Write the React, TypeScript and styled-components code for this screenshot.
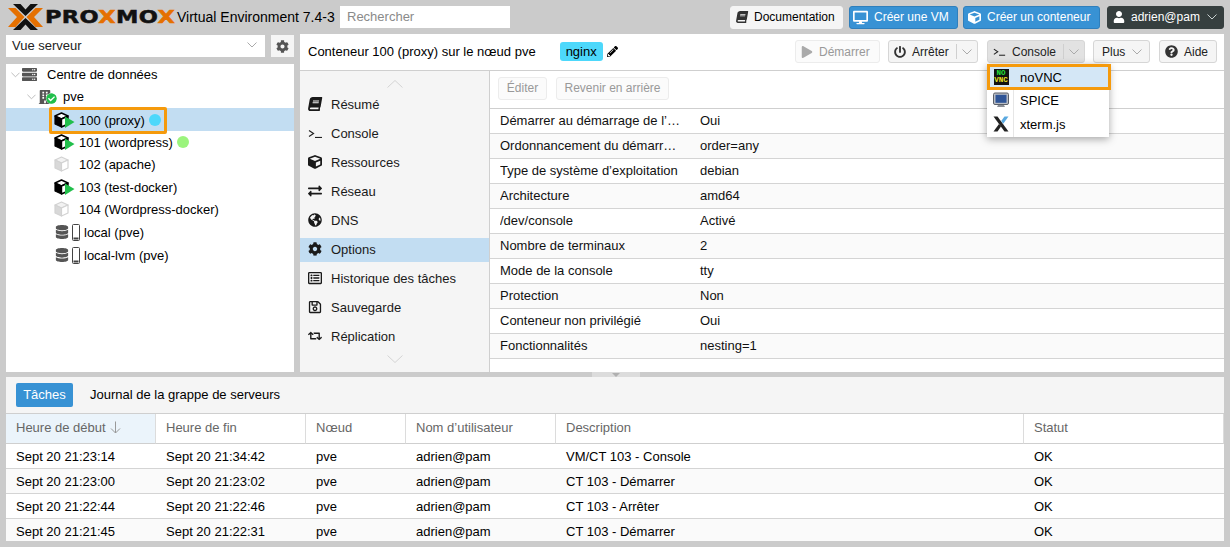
import React from 'react';
import styled, { createGlobalStyle } from 'styled-components';
import {
  FaBook, FaDesktop, FaCube, FaUser, FaCog, FaPlay, FaPowerOff, FaQuestionCircle,
  FaExchangeAlt, FaGlobeAmericas, FaRegListAlt, FaRegSave, FaRetweet, FaPencilAlt,
  FaDatabase, FaServer, FaBuilding, FaCheckCircle,
} from 'react-icons/fa';

const GlobalStyle = createGlobalStyle`
  html, body { margin: 0; padding: 0; background: #cbcbcb; }
  * { box-sizing: border-box; }
  body { font-family: "Liberation Sans", Arial, sans-serif; font-size: 13px; color: #000; }
`;

const Page = styled.div`
  width: 1230px;
  height: 547px;
  overflow: hidden;
  background: #cbcbcb;
  display: flex;
  flex-direction: column;
`;

/* top bar */
const Header = styled.header`
  height: 34px;
  flex: none;
  display: flex;
  align-items: center;
  padding: 0 6px 0 8px;
`;

const Logo = styled.div`
  display: flex;
  align-items: center;
  width: 169px;
  flex: none;
`;

const LogoWord = styled.span`
  font-family: "DejaVu Sans", sans-serif;
  font-weight: 700;
  font-size: 18px;
  letter-spacing: 0.3px;
  line-height: 1;
  margin-left: 2px;
  color: #111;
  -webkit-text-stroke: 0.5px currentColor;
  white-space: nowrap;
  transform: scaleX(1.25);
  transform-origin: left center;
`;

const LogoX = styled.span`
  color: #e57000;
`;

const Version = styled.span`
  font-size: 14px;
  white-space: nowrap;
  width: 163px;
  flex: none;
`;

const Search = styled.div`
  width: 170px;
  height: 22px;
  background: #fff;
  color: #8a8a8a;
  padding: 0 7px;
  line-height: 22px;
`;

const HeaderRight = styled.div`
  margin-left: auto;
  display: flex;
  gap: 6px;
  align-items: center;
  & > :nth-child(3) { margin-left: -1px; }
  & > :last-child { margin-left: 1px; }
`;

const TopButton = styled.div<{ $kind: 'light' | 'blue' | 'dark'; $width: number; $pad: number }>`
  width: ${p => p.$width}px;
  height: 23px;
  display: flex;
  align-items: center;
  gap: 6px;
  padding: 0 6px 0 ${p => p.$pad}px;
  font-size: 12px;
  white-space: nowrap;
  border-radius: 3px;
  border: 1px solid ${p => (p.$kind === 'blue' ? '#2f7fbc' : p.$kind === 'dark' ? '#363f3f' : '#f5f5f5')};
  background: ${p => (p.$kind === 'blue' ? '#3892d4' : p.$kind === 'dark' ? '#363f3f' : '#f5f5f5')};
  color: ${p => (p.$kind === 'light' ? '#000' : '#fff')};
  svg { flex: none; color: ${p => (p.$kind === 'light' ? '#333' : '#fff')}; }
`;

const Caret = styled.svg`
  width: 10px;
  height: 6px;
  flex: none;
  fill: none;
  stroke: currentColor;
  stroke-width: 1;
`;

const TopCaret = styled(Caret)`
  margin-left: auto;
  && { color: #c8d0d0; }
`;

const SlantedBook = styled(FaBook)`
  transform: skewX(-10deg);
`;

/* middle */
const Main = styled.div`
  height: 338px;
  flex: none;
  display: flex;
  gap: 6px;
  padding: 0 6px;
`;

const LeftColumn = styled.div`
  width: 288px;
  flex: none;
  display: flex;
  flex-direction: column;
  gap: 7px;
  padding-top: 1px;
`;

const ViewRow = styled.div`
  height: 22px;
  flex: none;
  display: flex;
  gap: 6px;
`;

const ViewSelect = styled.div`
  flex: 1;
  background: #fff;
  display: flex;
  align-items: center;
  justify-content: space-between;
  padding: 0 8px 2px 6px;
  color: #222;
  svg { color: #aaa; }
`;

const GearButton = styled.div`
  width: 23px;
  background: #f5f5f5;
  display: flex;
  align-items: center;
  justify-content: center;
  font-size: 13px;
  color: #555;
`;

const Tree = styled.div`
  flex: 1;
  background: #fff;
`;

const TreeRow = styled.div<{ $indent: number; $selected?: boolean }>`
  height: 22.6px;
  display: flex;
  align-items: center;
  padding-left: ${p => p.$indent}px;
  background: ${p => (p.$selected ? '#c2ddf2' : 'transparent')};
  white-space: nowrap;
  &:first-child { height: 21.6px; }
`;

const TreeChevron = styled(Caret)`
  color: #b5b5b5;
  margin-right: 2px;
  width: 9px;
`;

const TreeLabel = styled.span<{ $gap: number }>`
  margin-left: ${p => p.$gap}px;
`;

const Dot = styled.span<{ $color: string }>`
  width: 12px;
  height: 12px;
  border-radius: 50%;
  background: ${p => p.$color};
  margin-left: 4px;
  flex: none;
`;

const Highlight = styled.div`
  display: flex;
  align-items: center;
  height: 27px;
  width: 118px;
  border: 3px solid #f59a0c;
  border-radius: 2px;
  padding-left: 2px;
  flex: none;
  position: relative;
  top: 1px;
`;

const IconBox = styled.span<{ $width: number }>`
  width: ${p => p.$width}px;
  height: 17px;
  flex: none;
  position: relative;
  display: inline-flex;
  align-items: center;
`;

const NodeBadge = styled(FaCheckCircle)`
  position: absolute;
  left: 8px;
  top: 5px;
  font-size: 11px;
  color: #21bf4b;
  background: #fff;
  border-radius: 50%;
`;

const RightPanel = styled.div`
  flex: 1;
  display: flex;
  flex-direction: column;
  background: #fff;
  min-width: 0;
`;

const ContentHeader = styled.div`
  height: 37px;
  flex: none;
  display: flex;
  align-items: center;
  padding: 0 7px 1px 8px;
  border-bottom: 1px solid #cfcfcf;
`;

const Title = styled.span`
  white-space: nowrap;
`;

const Tag = styled.span`
  background: #4dd8fb;
  border-radius: 3px;
  height: 19px;
  line-height: 19px;
  padding: 0 6px;
  margin-left: 24px;
`;

const TagPencil = styled(FaPencilAlt)`
  font-size: 11px;
  margin-left: 4px;
`;

const Actions = styled.div`
  margin-left: auto;
  display: flex;
  gap: 8px;
  & > :nth-child(3), & > :nth-child(5) { margin-left: 1px; }
`;

const ToolButton = styled.div<{ $width: number; $disabled?: boolean; $pressed?: boolean; $pad?: number }>`
  position: relative;
  width: ${p => p.$width}px;
  height: 23px;
  display: flex;
  align-items: center;
  gap: 6px;
  padding: 0 5px 0 ${p => p.$pad ?? 5}px;
  font-size: 12px;
  white-space: nowrap;
  border-radius: 3px;
  border: 1px solid ${p => (p.$disabled ? '#ececec' : '#d6d6d6')};
  background: ${p => (p.$pressed ? '#e2e2e2' : p.$disabled ? '#fbfbfb' : '#f5f5f5')};
  color: ${p => (p.$disabled ? '#999' : '#222')};
  svg { flex: none; }
`;

const Split = styled.span`
  margin-left: auto;
  align-self: stretch;
  margin-block: 3px;
  border-left: 1px solid #cfcfcf;
  padding-left: 5px;
  display: flex;
  align-items: center;
  color: #aaa;
`;

const PlainCaret = styled(Caret)`
  margin-left: auto;
  margin-right: 2px;
  color: #aaa;
`;

const Menu = styled.div`
  position: absolute;
  left: -1px;
  top: 23px;
  width: 122px;
  height: 73px;
  background: #fff;
  box-shadow: 0 2px 8px rgba(0, 0, 0, 0.35);
  z-index: 5;
  color: #000;
  font-size: 13px;
`;

const MenuItem = styled.div<{ $active?: boolean }>`
  height: ${p => (p.$active ? 26 : 24)}px;
  width: ${p => (p.$active ? 124 : 122)}px;
  margin-bottom: ${p => (p.$active ? -2 : 0)}px;
  display: flex;
  align-items: center;
  background: ${p => (p.$active ? '#d4e7f6' : 'transparent')};
  border: ${p => (p.$active ? '3px solid #f59a0c' : 'none')};
  padding-left: ${p => (p.$active ? 3 : 6)}px;
  position: relative;
  z-index: ${p => (p.$active ? 1 : 0)};
`;

const MenuIcon = styled.span`
  width: 16px;
  height: 16px;
  flex: none;
  display: flex;
  align-items: center;
  justify-content: center;
  margin-right: 11px;
`;

const MenuSeparator = styled.div`
  position: absolute;
  left: 26px;
  top: 0;
  bottom: 0;
  border-left: 1px solid #e6e6e6;
`;

const NoVncBadge = styled.span`
  width: 15px;
  height: 16px;
  background: #111;
  display: flex;
  flex-direction: column;
  justify-content: center;
  align-items: center;
  font-family: "Liberation Mono", monospace;
  font-weight: 700;
  font-size: 7.5px;
  line-height: 7.5px;
`;

const NoVncLine = styled.span<{ $color: string }>`
  color: ${p => p.$color};
`;

const ContentBody = styled.div`
  flex: 1;
  display: flex;
  min-height: 0;
`;

const SideNav = styled.nav`
  width: 190px;
  flex: none;
  background: #f5f5f5;
  border-right: 1px solid #cfcfcf;
  display: flex;
  flex-direction: column;
  gap: 5px;
`;

const NavScroll = styled.div<{ $height: number; $align: string }>`
  height: ${p => p.$height}px;
  flex: none;
  display: flex;
  align-items: ${p => p.$align};
  justify-content: center;
  color: #d4d4d4;
`;

const NavCaret = styled.svg`
  width: 16px;
  height: 8px;
  fill: none;
  stroke: currentColor;
  stroke-width: 1;
`;

const NavItem = styled.div<{ $active?: boolean }>`
  height: 24px;
  flex: none;
  display: flex;
  align-items: center;
  padding: 0 0 2px 8px;
  background: ${p => (p.$active ? '#c2ddf2' : 'transparent')};
  color: #1a1a1a;
  svg { font-size: 14px; flex: none; color: #1a1a1a; }
`;

const NavIconSlot = styled.span`
  width: 23px;
  flex: none;
  display: flex;
  align-items: center;
`;

const Options = styled.div`
  flex: 1;
  min-width: 0;
`;

const OptionsToolbar = styled.div`
  height: 38px;
  display: flex;
  gap: 9px;
  padding: 6px 8px;
  border-bottom: 1px solid #cfcfcf;
`;

const GhostButton = styled.div<{ $width: number }>`
  width: ${p => p.$width}px;
  height: 23px;
  border: 1px solid #ececec;
  border-radius: 3px;
  background: #fbfbfb;
  color: #999;
  font-size: 12px;
  text-align: center;
  line-height: 21px;
`;

const OptionRow = styled.div<{ $alt: boolean }>`
  height: 25px;
  display: flex;
  align-items: center;
  padding: 0 0 2px 10px;
  border-bottom: 1px solid #d4d4d4;
  background: ${p => (p.$alt ? '#fafafa' : '#fff')};
  color: #111;
`;

const OptionKey = styled.span`
  width: 200px;
  flex: none;
  white-space: nowrap;
  overflow: hidden;
`;

/* splitter between the panels */
const Splitter = styled.div`
  height: 5px;
  flex: none;
  display: flex;
  justify-content: center;
`;

const Grip = styled.div`
  width: 48px;
  margin-left: 2px;
  background: #dcdcdc;
  display: flex;
  justify-content: center;
`;

const GripArrow = styled.div`
  width: 0;
  height: 0;
  margin-top: 1px;
  border: 4px solid transparent;
  border-top-color: #b0b0b0;
  border-bottom: 0;
`;

/* task log */
const Bottom = styled.section`
  height: 164px;
  flex: none;
  margin: 0 6px;
  display: flex;
  flex-direction: column;
  background: #fff;
  overflow: hidden;
`;

const TabBar = styled.div`
  height: 37px;
  flex: none;
  background: #f5f5f5;
  border-bottom: 1px solid #cfcfcf;
  display: flex;
  align-items: center;
  padding: 0 0 1px 10px;
  gap: 17px;
`;

const ActiveTab = styled.div`
  width: 57px;
  height: 24px;
  line-height: 23px;
  text-align: center;
  border-radius: 2px;
  background: #3892d4;
  color: #fff;
`;

const LogGrid = styled.div`
  display: grid;
  grid-template-columns: 150px 150px 100px 150px 468px 1fr;
`;

const HeadCell = styled.div<{ $sorted?: boolean }>`
  height: 30px;
  display: flex;
  align-items: center;
  padding: 0 0 2px 10px;
  gap: 4px;
  color: #666;
  border-right: 1px solid #dcdcdc;
  border-bottom: 1px solid #cfcfcf;
  background: ${p => (p.$sorted ? '#ebf4fb' : '#fff')};
  &:last-of-type { border-right: 0; }
`;

const Cell = styled.div<{ $alt: boolean }>`
  height: 25px;
  display: flex;
  align-items: center;
  padding-left: 10px;
  white-space: nowrap;
  border-bottom: 1px solid #d4d4d4;
  background: ${p => (p.$alt ? '#fafafa' : '#fff')};
`;

const ChevronPath = () => <path d="M0.5 0.5 L5 5 L9.5 0.5" />;

const Chevron = () => (
  <Caret viewBox="0 0 10 6">
    <ChevronPath />
  </Caret>
);

const CtIcon = ({ running }: { running: boolean }) => (
  <svg width="21" height="17" viewBox="0 0 21 17">
    {running ? (
      <>
        <path d="M7.5 1 L14 4 L7.5 7 L1 4 Z" fill="#fff" stroke="#000" strokeWidth="1.4" strokeLinejoin="round" />
        <path d="M1 4 L7.5 7 L7.5 15 L1 12 Z" fill="#000" stroke="#000" strokeWidth="1.2" strokeLinejoin="round" />
        <path d="M7.5 7 L14 4 L14 12 L7.5 15 Z" fill="#fff" stroke="#000" strokeWidth="1.4" strokeLinejoin="round" />
        <path d="M11 4.5 L20.5 10 L11 16 Z" fill="#21bf4b" />
      </>
    ) : (
      <>
        <path d="M7.5 1 L14 4 L7.5 7 L1 4 Z" fill="#f2f2f2" stroke="#d2d2d2" strokeWidth="1.2" strokeLinejoin="round" />
        <path d="M1 4 L7.5 7 L7.5 15 L1 12 Z" fill="#d8d8d8" stroke="#d2d2d2" strokeWidth="1.2" strokeLinejoin="round" />
        <path d="M7.5 7 L14 4 L14 12 L7.5 15 Z" fill="#fff" stroke="#d2d2d2" strokeWidth="1.2" strokeLinejoin="round" />
      </>
    )}
  </svg>
);

const StorageIcon = () => (
  <>
    <FaDatabase size={14} color="#555" />
    <svg width="8" height="17" viewBox="0 0 8 17" style={{ marginLeft: 3 }}>
      <rect x="0.5" y="0.5" width="7" height="16" rx="1" fill="#fff" stroke="#444" />
      <rect x="1.5" y="13.5" width="5" height="2" fill="#444" />
    </svg>
  </>
);

const PromptIcon = ({ size = 15 }: { size?: number }) => (
  <svg width={size} height={size * 0.7} viewBox="0 0 15 10.5" fill="none" stroke="#222" strokeWidth="1.2">
    <path d="M1 2.5 L5.5 5.5 L1 8.5" />
    <path d="M7 9.5 H14" />
  </svg>
);

const ProxmoxMark = () => (
  <svg width="35" height="26" viewBox="0 0 35 26">
    <path d="M0 4 H7.5 L16.5 13 L7.5 23 H0 L9 13 Z" fill="#e57000" />
    <path d="M35 4 H27.5 L18.5 13 L27.5 23 H35 L26 13 Z" fill="#e57000" />
    <path d="M5 0 H12.5 L17.5 5.5 L22.5 0 H30 L17.5 12 Z" fill="#111" />
    <path d="M5 26 H12.5 L17.5 20.5 L22.5 26 H30 L17.5 14 Z" fill="#111" />
  </svg>
);

const SpiceIcon = () => (
  <svg width="16" height="16" viewBox="0 0 16 16">
    <rect x="0.5" y="1" width="15" height="11.5" rx="1.5" fill="#b9bdc4" stroke="#5a5f68" />
    <rect x="2.5" y="2.8" width="11" height="8" fill="#2f5597" />
    <path d="M5 13 H11 L12 15 H4 Z" fill="#8b8f96" />
  </svg>
);

const XtermIcon = () => (
  <svg width="16" height="16" viewBox="0 0 16 16">
    <path d="M0.5 0.5 H4.5 L15.5 15.5 H11.5 Z" fill="#222" />
    <path d="M0.5 15.5 L6 8 L8 10.6 L4.5 15.5 Z" fill="#222" />
    <path d="M15.5 0.5 H11.5 L8.2 5 L10.2 7.7 Z" fill="#5aa9e0" />
  </svg>
);

const navItems: { label: string; icon: React.ReactNode; active?: boolean }[] = [
  { label: 'Résumé', icon: <SlantedBook /> },
  { label: 'Console', icon: <PromptIcon /> },
  { label: 'Ressources', icon: <FaCube /> },
  { label: 'Réseau', icon: <FaExchangeAlt /> },
  { label: 'DNS', icon: <FaGlobeAmericas /> },
  { label: 'Options', icon: <FaCog />, active: true },
  { label: 'Historique des tâches', icon: <FaRegListAlt /> },
  { label: 'Sauvegarde', icon: <FaRegSave /> },
  { label: 'Réplication', icon: <FaRetweet /> },
];

const options = [
  ['Démarrer au démarrage de l’…', 'Oui'],
  ['Ordonnancement du démarr…', 'order=any'],
  ['Type de système d’exploitation', 'debian'],
  ['Architecture', 'amd64'],
  ['/dev/console', 'Activé'],
  ['Nombre de terminaux', '2'],
  ['Mode de la console', 'tty'],
  ['Protection', 'Non'],
  ['Conteneur non privilégié', 'Oui'],
  ['Fonctionnalités', 'nesting=1'],
];

const logHead = ['Heure de début', 'Heure de fin', 'Nœud', 'Nom d’utilisateur', 'Description', 'Statut'];

const logRows = [
  ['Sept 20 21:23:14', 'Sept 20 21:34:42', 'pve', 'adrien@pam', 'VM/CT 103 - Console', 'OK'],
  ['Sept 20 21:23:00', 'Sept 20 21:23:02', 'pve', 'adrien@pam', 'CT 103 - Démarrer', 'OK'],
  ['Sept 20 21:22:44', 'Sept 20 21:22:46', 'pve', 'adrien@pam', 'CT 103 - Arrêter', 'OK'],
  ['Sept 20 21:21:45', 'Sept 20 21:22:31', 'pve', 'adrien@pam', 'CT 103 - Démarrer', 'OK'],
];

const App: React.FC = () => (
  <Page>
    <GlobalStyle />
    <Header>
      <Logo>
        <ProxmoxMark />
        <LogoWord>
          PRO<LogoX>X</LogoX>MO<LogoX>X</LogoX>
        </LogoWord>
      </Logo>
      <Version>Virtual Environment 7.4-3</Version>
      <Search>Rechercher</Search>
      <HeaderRight>
        <TopButton $kind="light" $width={113} $pad={5}>
          <SlantedBook size={12} />
          Documentation
        </TopButton>
        <TopButton $kind="blue" $width={109} $pad={3}>
          <FaDesktop size={15} />
          Créer une VM
        </TopButton>
        <TopButton $kind="blue" $width={137} $pad={4}>
          <FaCube size={13} />
          Créer un conteneur
        </TopButton>
        <TopButton $kind="dark" $width={117} $pad={5}>
          <FaUser size={12} />
          adrien@pam
          <TopCaret viewBox="0 0 10 6">
            <ChevronPath />
          </TopCaret>
        </TopButton>
      </HeaderRight>
    </Header>

    <Main>
      <LeftColumn>
        <ViewRow>
          <ViewSelect>
            Vue serveur
            <Chevron />
          </ViewSelect>
          <GearButton>
            <FaCog />
          </GearButton>
        </ViewRow>
        <Tree>
          <TreeRow $indent={5}>
            <TreeChevron viewBox="0 0 10 6">
              <ChevronPath />
            </TreeChevron>
            <IconBox $width={16}>
              <FaServer size={15} color="#555" />
            </IconBox>
            <TreeLabel $gap={9}>Centre de données</TreeLabel>
          </TreeRow>
          <TreeRow $indent={21}>
            <TreeChevron viewBox="0 0 10 6">
              <ChevronPath />
            </TreeChevron>
            <IconBox $width={16}>
              <FaBuilding size={14} color="#555" />
              <NodeBadge />
            </IconBox>
            <TreeLabel $gap={9}>pve</TreeLabel>
          </TreeRow>
          <TreeRow $indent={43} $selected>
            <Highlight>
              <CtIcon running />
              <TreeLabel $gap={4}>100 (proxy)</TreeLabel>
              <Dot $color="#4dd8fb" />
            </Highlight>
          </TreeRow>
          <TreeRow $indent={48}>
            <CtIcon running />
            <TreeLabel $gap={4}>101 (wordpress)</TreeLabel>
            <Dot $color="#9bf47d" />
          </TreeRow>
          <TreeRow $indent={48}>
            <CtIcon running={false} />
            <TreeLabel $gap={4}>102 (apache)</TreeLabel>
          </TreeRow>
          <TreeRow $indent={48}>
            <CtIcon running />
            <TreeLabel $gap={4}>103 (test-docker)</TreeLabel>
          </TreeRow>
          <TreeRow $indent={48}>
            <CtIcon running={false} />
            <TreeLabel $gap={4}>104 (Wordpress-docker)</TreeLabel>
          </TreeRow>
          <TreeRow $indent={49}>
            <StorageIcon />
            <TreeLabel $gap={4}>local (pve)</TreeLabel>
          </TreeRow>
          <TreeRow $indent={49}>
            <StorageIcon />
            <TreeLabel $gap={4}>local-lvm (pve)</TreeLabel>
          </TreeRow>
        </Tree>
      </LeftColumn>

      <RightPanel>
        <ContentHeader>
          <Title>Conteneur 100 (proxy) sur le nœud pve</Title>
          <Tag>nginx</Tag>
          <TagPencil />
          <Actions>
            <ToolButton $width={85} $disabled>
              <FaPlay size={12} color="#aaa" />
              Démarrer
            </ToolButton>
            <ToolButton $width={90}>
              <FaPowerOff size={12} color="#333" />
              Arrêter
              <Split>
                <Chevron />
              </Split>
            </ToolButton>
            <ToolButton $width={98} $pressed>
              <PromptIcon size={13} />
              Console
              <Split>
                <Chevron />
              </Split>
              <Menu>
                <MenuSeparator />
                <MenuItem $active>
                  <MenuIcon>
                    <NoVncBadge>
                      <NoVncLine $color="#22e03a">NO</NoVncLine>
                      <NoVncLine $color="#e8e020">VNC</NoVncLine>
                    </NoVncBadge>
                  </MenuIcon>
                  noVNC
                </MenuItem>
                <MenuItem>
                  <MenuIcon>
                    <SpiceIcon />
                  </MenuIcon>
                  SPICE
                </MenuItem>
                <MenuItem>
                  <MenuIcon>
                    <XtermIcon />
                  </MenuIcon>
                  xterm.js
                </MenuItem>
              </Menu>
            </ToolButton>
            <ToolButton $width={57} $pad={8}>
              Plus
              <PlainCaret viewBox="0 0 10 6">
                <ChevronPath />
              </PlainCaret>
            </ToolButton>
            <ToolButton $width={58}>
              <FaQuestionCircle size={13} color="#333" />
              Aide
            </ToolButton>
          </Actions>
        </ContentHeader>
        <ContentBody>
          <SideNav>
            <NavScroll $height={17} $align="flex-end">
              <NavCaret viewBox="0 0 16 8">
                <path d="M0.5 7.5 L8 0.5 L15.5 7.5" />
              </NavCaret>
            </NavScroll>
            {navItems.map(item => (
              <NavItem key={item.label} $active={item.active}>
                <NavIconSlot>{item.icon}</NavIconSlot>
                {item.label}
              </NavItem>
            ))}
            <NavScroll $height={10} $align="center">
              <NavCaret viewBox="0 0 16 8">
                <path d="M0.5 0.5 L8 7.5 L15.5 0.5" />
              </NavCaret>
            </NavScroll>
          </SideNav>
          <Options>
            <OptionsToolbar>
              <GhostButton $width={49}>Éditer</GhostButton>
              <GhostButton $width={113}>Revenir en arrière</GhostButton>
            </OptionsToolbar>
            {options.map(([key, value], i) => (
              <OptionRow key={key} $alt={i % 2 === 1}>
                <OptionKey>{key}</OptionKey>
                {value}
              </OptionRow>
            ))}
          </Options>
        </ContentBody>
      </RightPanel>
    </Main>

    <Splitter>
      <Grip>
        <GripArrow />
      </Grip>
    </Splitter>

    <Bottom>
      <TabBar>
        <ActiveTab>Tâches</ActiveTab>
        Journal de la grappe de serveurs
      </TabBar>
      <LogGrid>
        {logHead.map((label, i) => (
          <HeadCell key={label} $sorted={i === 0}>
            {label}
            {i === 0 && (
              <svg width="11" height="13" viewBox="0 0 11 13" fill="none" stroke="#999">
                <path d="M5.5 0.5 V12 M1 7.5 L5.5 12 L10 7.5" />
              </svg>
            )}
          </HeadCell>
        ))}
        {logRows.map((row, r) =>
          row.map((value, c) => (
            <Cell key={`${r}-${c}`} $alt={r % 2 === 1}>
              {value}
            </Cell>
          )),
        )}
      </LogGrid>
    </Bottom>
  </Page>
);

export default App;
